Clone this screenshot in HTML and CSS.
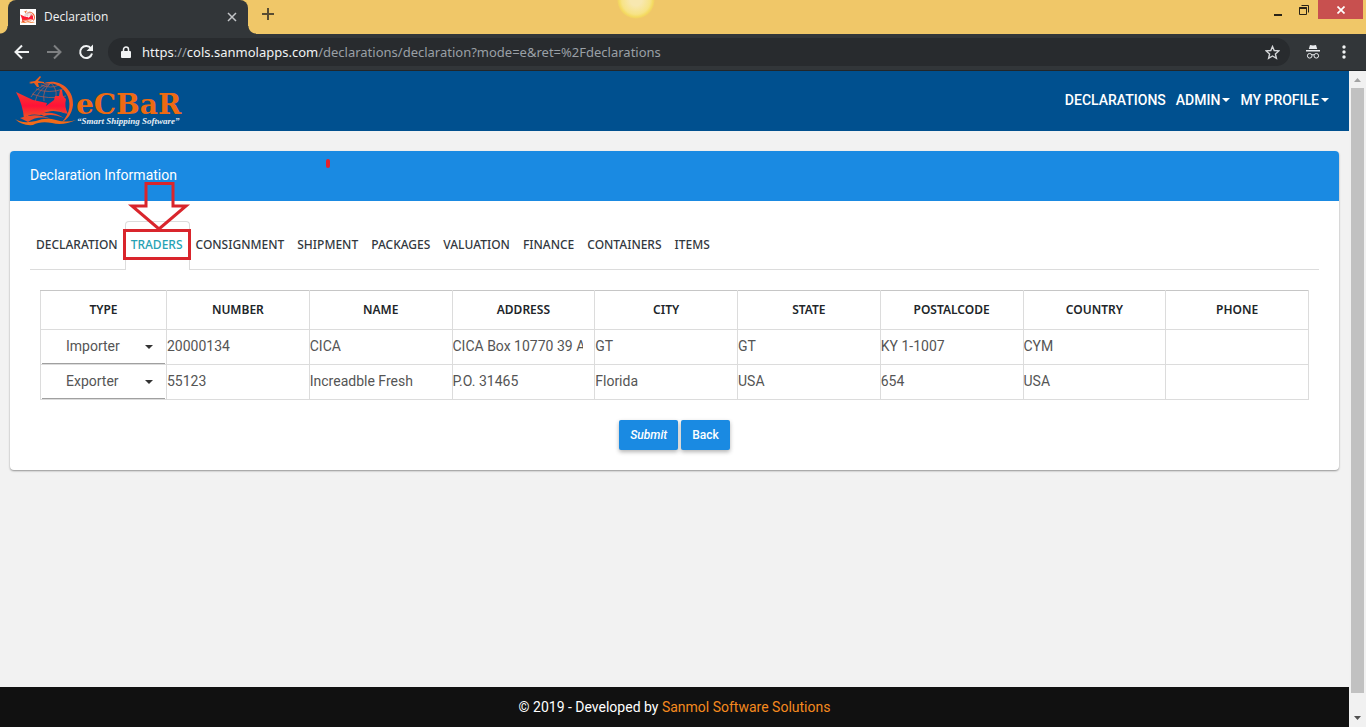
FILE: index.html
```html
<!DOCTYPE html>
<html lang="en">
<head>
<meta charset="utf-8">
<title>Declaration</title>
<link rel="stylesheet" href="styles.css">
</head>
<body>
<svg class="defs" width="0" height="0" aria-hidden="true">
  <defs>
    <linearGradient id="ship-red" x1="0" y1="0" x2="0" y2="1"><stop offset="0" stop-color="#f3402c"/><stop offset=".55" stop-color="#ff1238"/><stop offset="1" stop-color="#f05a22"/></linearGradient>
    <symbol id="ship" viewBox="0 0 62 52">
      <g fill="none" stroke="#a65a55" stroke-width=".8">
        <path d="M16 21Q22 10 36 7M20 26Q22 14 36 7M29 25Q27 14 36 7M41 20Q42 13 36 7M17 18Q33 24 51 20M21 13Q34 18 48 13M26 9Q36 13 44 9"/>
      </g>
      <path d="M27 8C42 1 59 12 58 29C57 38 52 44 47 46C55 38 57 26 51 17C45 8 37 6 27 8Z" fill="#ef5b23"/>
      <path d="M1 16L18 24L32 27L31 30L39 24L40 20L44 20L45 14L47 14L48 20L51 23Q49 31 53 38Q38 31 25 39Q13 37 9 43Q8 29 1 16Z" fill="url(#ship-red)"/>
      <path d="M5 42Q21 36 36 43Q23 39 13 46ZM25 38Q37 34 49 42Q37 37 29 40ZM28 35Q40 31 52 38Q40 33 31 36Z" fill="#ee4b2a"/>
      <path d="M0 43Q7 48 21 45Q31 41 41 44Q51 47 61 44Q48 50 37 47Q25 45 18 49Q7 50 0 43Z" fill="#f36b19"/>
      <path d="M14 6L20 5L25 0L26 1L23 5L29 6L29 7L23 7L24 11L22 11L19 7L14 8L16 7Z" fill="#ed601c"/>
    </symbol>
  </defs>
</svg>

<header class="browser">
  <div class="tabstrip">
    <div class="browser-tab">
      <svg class="favicon" viewBox="0 0 16 16"><path fill="#fff" d="M0 0h16v16H0z"/><use href="#ship" x="0" y="1" width="16" height="14"/></svg>
      <span class="browser-tab-title">Declaration</span>
      <button class="icon-button tab-close" aria-label="Close tab"><svg width="10" height="10" viewBox="0 0 10 10"><path d="M1 1l8 8M9 1L1 9" stroke="#c3c5c8" stroke-width="1.5"/></svg></button>
    </div>
    <button class="icon-button new-tab" aria-label="New tab"><svg width="12" height="12" viewBox="0 0 12 12"><path d="M6 0v12M0 6h12" stroke="#594d32" stroke-width="2"/></svg></button>
    <span class="sun"></span>
    <div class="window-controls">
      <button class="icon-button" aria-label="Minimize"><svg width="8" height="14" viewBox="0 0 8 14"><path d="M0 11h8v2H0z" fill="#292317"/></svg></button>
      <button class="icon-button" aria-label="Restore"><svg width="10" height="10" viewBox="0 0 10 10"><path d="M2.500.500h7v7M0 3h8" fill="none" stroke="#292317"/><path d="M.5 2.500h7v7h-7zM0 3.500h8" fill="none" stroke="#292317"/></svg></button>
      <button class="icon-button window-close" aria-label="Close window"><svg width="8" height="8" viewBox="0 0 8 8"><path d="M.5.5l7 7M7.500.500l-7 7" stroke="#fff" stroke-width="1.700"/></svg></button>
    </div>
  </div>
  <div class="toolbar">
    <button class="icon-button" aria-label="Back"><svg width="16" height="16" viewBox="0 0 16 16"><path d="M15 8H2M8 1.500L1.500 8L8 14.500" fill="none" stroke="#f1f3f4" stroke-width="2"/></svg></button>
    <button class="icon-button" aria-label="Forward"><svg width="16" height="16" viewBox="0 0 16 16"><path d="M1 8h13M8 1.500L14.500 8L8 14.500" fill="none" stroke="#7e8082" stroke-width="2"/></svg></button>
    <button class="icon-button" aria-label="Reload"><svg width="16" height="16" viewBox="0 0 16 16"><path d="M13 4.500A6 6 0 1 0 14 9.500" fill="none" stroke="#f1f3f4" stroke-width="2"/><path d="M15 .5V7H8.500Z" fill="#f1f3f4"/></svg></button>
    <div class="address">
      <svg width="10" height="13" viewBox="0 0 10 13"><path d="M1 5h8q1 0 1 1v5q0 1-1 1H1q-1 0-1-1V6q0-1 1-1" fill="#f1f3f4"/><path d="M2.500 6V3.500a2.500 2.500 0 0 1 5 0V6" fill="none" stroke="#f1f3f4" stroke-width="1.500"/></svg>
      <div class="url"><span class="scheme">https</span>://<span class="host">cols.sanmolapps.com</span>/declarations/declaration?mode=e&amp;ret=%2Fdeclarations</div>
      <button class="icon-button" aria-label="Bookmark"><svg width="15" height="15" viewBox="0 0 15 15"><path d="M7.500 1.500L9.200 5.500L13.800 5.900L10.400 8.900L11.400 13.300L7.500 11L3.600 13.300L4.600 8.900L1.200 5.900L5.800 5.500Z" fill="none" stroke="#d5d7d9" stroke-width="1.400"/></svg></button>
    </div>
    <svg class="incognito" width="14" height="14" viewBox="0 0 14 14"><path d="M4 0l3 .6L10 0l1.200 4H2.800ZM0 5h14v1.400H0Z" fill="#e8eaed"/><path d="M6 10q1-1 2 0" stroke="#e8eaed" fill="none"/><circle cx="3.700" cy="10.800" r="2.300" fill="none" stroke="#e8eaed"/><circle cx="10.300" cy="10.800" r="2.300" fill="none" stroke="#e8eaed"/></svg>
    <button class="icon-button" aria-label="Menu"><svg width="4" height="14" viewBox="0 0 4 14"><g fill="#f1f3f4"><circle cx="2" cy="2" r="1.700"/><circle cx="2" cy="7" r="1.700"/><circle cx="2" cy="12" r="1.700"/></g></svg></button>
  </div>
</header>

<div class="viewport">
  <div class="page">
    <header class="navbar">
      <a href="#" class="brand" aria-label="DeCBaR home">
        <svg width="180" height="60" viewBox="0 0 180 60">
          <use href="#ship" x="0" y="6" width="62" height="52"/>
          <text class="brand-name" x="61" y="44">eCBaR</text>
          <text class="brand-tagline" x="62" y="54">“Smart Shipping Software”</text>
        </svg>
      </a>
      <nav class="main-nav">
        <a href="#">DECLARATIONS</a>
        <a href="#" class="has-menu">ADMIN</a>
        <a href="#" class="has-menu">MY PROFILE</a>
      </nav>
    </header>

    <main class="content">
      <section class="card">
        <h1 class="card-title">Declaration Information<span class="ink-mark"></span></h1>
        <div class="card-body">
          <nav class="tabs">
            <a href="#">DECLARATION</a>
            <a href="#" class="active">TRADERS
              <svg class="callout" width="70" height="80" viewBox="0 0 70 80" fill="none" stroke="#d9252c" stroke-width="3"><path d="M24 2.500H51V25H64L37 48L10 25H24Z"/><path d="M2.500 49.500H67.500V77.500H2.500Z"/></svg>
            </a>
            <a href="#">CONSIGNMENT</a>
            <a href="#">SHIPMENT</a>
            <a href="#">PACKAGES</a>
            <a href="#">VALUATION</a>
            <a href="#">FINANCE</a>
            <a href="#">CONTAINERS</a>
            <a href="#">ITEMS</a>
          </nav>
          <form class="traders">
            <table>
              <thead>
                <tr><th class="type">TYPE</th><th>NUMBER</th><th>NAME</th><th>ADDRESS</th><th>CITY</th><th>STATE</th><th>POSTALCODE</th><th>COUNTRY</th><th>PHONE</th></tr>
              </thead>
              <tbody>
                <tr>
                  <td><div class="select"><select aria-label="Type"><option>Importer</option><option>Exporter</option></select></div></td>
                  <td><input aria-label="Number" value="20000134"></td>
                  <td><input aria-label="Name" value="CICA"></td>
                  <td><input aria-label="Address" value="CICA Box 10770 39 Airport Road"></td>
                  <td><input aria-label="City" value="GT"></td>
                  <td><input aria-label="State" value="GT"></td>
                  <td><input aria-label="Postal code" value="KY 1-1007"></td>
                  <td><input aria-label="Country" value="CYM"></td>
                  <td><input aria-label="Phone" value=""></td>
                </tr>
                <tr>
                  <td><div class="select"><select aria-label="Type"><option>Exporter</option><option>Importer</option></select></div></td>
                  <td><input aria-label="Number" value="55123"></td>
                  <td><input aria-label="Name" value="Increadble Fresh"></td>
                  <td><input aria-label="Address" value="P.O. 31465"></td>
                  <td><input aria-label="City" value="Florida"></td>
                  <td><input aria-label="State" value="USA"></td>
                  <td><input aria-label="Postal code" value="654"></td>
                  <td><input aria-label="Country" value="USA"></td>
                  <td><input aria-label="Phone" value=""></td>
                </tr>
              </tbody>
            </table>
            <div class="actions">
              <button type="submit" class="button submit">Submit</button>
              <button type="button" class="button">Back</button>
            </div>
          </form>
        </div>
      </section>
    </main>

    <footer class="footer">© 2019 - Developed by <a href="#">Sanmol Software Solutions</a></footer>
  </div>
  <div class="scrollbar" aria-hidden="true">
    <svg width="17" height="17" viewBox="0 0 17 17"><path d="M5 11h7L8.500 7Z" fill="#a3a3a3"/></svg>
    <span class="thumb"></span>
    <svg width="17" height="17" viewBox="0 0 17 17"><path d="M5 6h7L8.500 10Z" fill="#505050"/></svg>
  </div>
</div>
</body>
</html>
```
FILE: styles.css
```css
* { box-sizing: border-box; }

body {
  margin: 0;
  height: 100vh;
  display: flex;
  flex-direction: column;
  font: 14px/20px Roboto, sans-serif;
  background: #f2f2f2;
}

a { text-decoration: none; color: inherit; }
svg { flex: none; display: block; }
.defs { position: absolute; }

.icon-button {
  display: flex;
  align-items: center;
  justify-content: center;
  padding: 0;
  border: 0;
  background: none;
}

/* Browser frame */
.browser { flex: none; background: #323639; }

.tabstrip {
  position: relative;
  display: flex;
  height: 34px;
  padding-left: 8px;
  background: #f0c768;
}

.browser-tab {
  position: relative;
  display: flex;
  align-items: center;
  width: 240px;
  padding: 0 11px 0 12px;
  border-radius: 8px 8px 0 0;
  background: #323639;
  color: #f1f3f4;
  font: 12px/16px "Open Sans", sans-serif;
}

.browser-tab::before,
.browser-tab::after {
  content: "";
  position: absolute;
  bottom: 0;
  width: 8px;
  height: 8px;
}
.browser-tab::before { left: -8px; background: radial-gradient(circle at 0 0, #f0c768 7px, #323639 8px); }
.browser-tab::after { right: -8px; background: radial-gradient(circle at 100% 0, #f0c768 7px, #323639 8px); }

.favicon { width: 16px; height: 16px; }
.browser-tab-title { flex: 1; margin-left: 8px; }
.new-tab { width: 40px; height: 28px; }

.sun {
  position: absolute;
  left: 617px;
  top: -19px;
  width: 38px;
  height: 38px;
  border-radius: 50%;
  background: radial-gradient(circle closest-side, #f8e8b0 30%, #f7e386 75%, #f4da60 90%, #f0c768 100%);
}

.window-controls {
  display: flex;
  align-items: flex-start;
  margin-left: auto;
  padding-right: 3px;
}
.window-controls .icon-button { width: 26px; height: 19px; }
.window-controls .window-close { width: 45px; margin-left: 1px; background: #c8504f; }

.toolbar {
  display: flex;
  align-items: center;
  gap: 16px;
  height: 37px;
  padding: 0 20px 0 14px;
  border-bottom: 1px solid #222629;
}

.address {
  flex: 1;
  display: flex;
  align-items: center;
  gap: 11px;
  height: 28px;
  padding: 0 10px 0 13px;
  margin-left: -2px;
  border-radius: 14px;
  background: #282b2e;
}
.url {
  flex: 1;
  color: #9aa0a6;
  font: 13px/20px "Noto Sans", sans-serif;
}
.scheme, .host { color: #f1f3f4; }
.incognito { margin-right: 6px; }

/* Page */
.viewport { flex: 1; display: flex; min-height: 0; }
.page { flex: 1; display: flex; flex-direction: column; min-width: 0; }

.navbar {
  display: flex;
  align-items: center;
  justify-content: space-between;
  height: 60px;
  padding: 0 20px 2px 15px;
  background: #00508f;
}
.brand-name { fill: #ee6a12; font: bold 28px "DejaVu Serif", serif; }
.brand-tagline { fill: #e5edf5; font: italic bold 9px "Liberation Serif", serif; }

.main-nav {
  display: flex;
  gap: 10px;
  color: #fff;
  font-weight: 500;
}
.has-menu { display: flex; align-items: center; gap: 2px; }
.has-menu::after {
  content: "";
  border: 4px solid transparent;
  border-top-color: #fff;
  border-bottom: 0;
}

.content { flex: 1; padding: 20px 10px; }

.card {
  border-radius: 4px;
  background: #fff;
  box-shadow: 0 1px 2px rgba(0, 0, 0, .4);
}
.card-title {
  position: relative;
  margin: 0;
  padding: 14px 20px 16px;
  border-radius: 4px 4px 0 0;
  background: #1a8ae2;
  color: #fff;
  font-size: 14px;
  line-height: 20px;
  font-weight: 400;
}
.ink-mark {
  position: absolute;
  left: 316px;
  top: 8px;
  width: 4px;
  height: 9px;
  border-radius: 2px;
  background: #e8202a;
}
.card-body { padding: 20px; }

.tabs {
  display: flex;
  border-bottom: 1px solid #dcdcdc;
  color: #32383e;
  font: 500 12px/20px "Noto Sans", sans-serif;
}
.tabs a {
  position: relative;
  margin-bottom: -1px;
  padding: 13px 6px 15px 5px;
  border: 1px solid transparent;
  border-bottom: 0;
  border-radius: 4px 4px 0 0;
}
.tabs .active {
  border-color: #dcdcdc;
  background: #fff;
  color: #26a2b4;
}
.callout { position: absolute; left: -4px; top: -41px; }

.traders { padding: 20px 10px 0; }

table {
  width: 100%;
  border-collapse: collapse;
  table-layout: fixed;
}
th, td { padding: 0; border: 1px solid #dcdcdc; }
th {
  height: 39px;
  border-top-color: #c6c6c6;
  color: #212529;
  font: 600 12px/20px "Noto Sans", sans-serif;
}
.type { width: 126px; }
td { height: 35px; }

td input {
  display: block;
  width: 100%;
  height: 34px;
  padding: 0 11px 2px 0;
  border: 0;
  background: none;
  color: #555;
  font: 14px/20px Roboto, sans-serif;
}

.select { position: relative; padding: 0 1px; }
.select::after {
  content: "";
  position: absolute;
  right: 13px;
  top: 15px;
  border: 4px solid transparent;
  border-top-color: #333;
  border-bottom: 0;
  pointer-events: none;
}
select {
  appearance: none;
  display: block;
  width: 100%;
  height: 34px;
  padding: 0 24px 2px;
  border: 0;
  border-bottom: 1px solid #a0a0a0;
  border-radius: 0;
  background: none;
  color: #555;
  font: 14px/20px Roboto, sans-serif;
}

.actions {
  display: flex;
  justify-content: center;
  gap: 3px;
  padding-top: 20px;
}
.button {
  height: 30px;
  padding: 0 11px;
  border: 0;
  border-radius: 2px;
  background: #1a8ae2;
  box-shadow: 0 2px 4px rgba(0, 0, 0, .3);
  color: #fff;
  font: 500 12px/20px Roboto, sans-serif;
}
.submit { font-style: italic; }

.footer {
  padding: 10px;
  background: #111;
  color: #fff;
  text-align: center;
}
.footer a { color: #f58a1f; }

.scrollbar {
  display: flex;
  flex-direction: column;
  width: 17px;
  background: #f1f1f1;
}
.thumb { flex: 0 1 605px; margin: 0 2px; background: #c1c1c1; }
.thumb + svg { margin-top: auto; }
```
